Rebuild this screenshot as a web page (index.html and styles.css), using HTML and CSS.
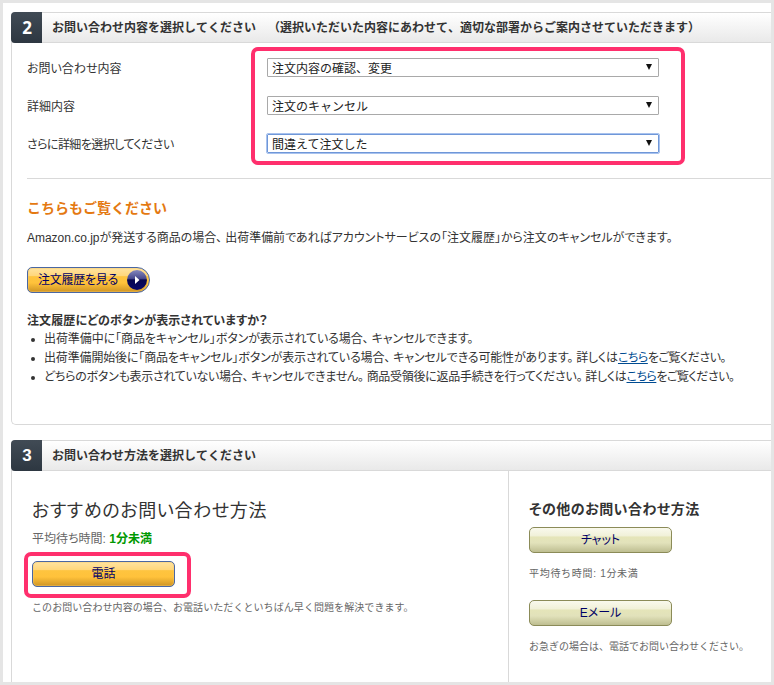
FILE: index.html
```html
<!DOCTYPE html>
<html lang="ja">
<head>
<meta charset="utf-8">
<title>お問い合わせ</title>
<link rel="stylesheet" href="styles.css">
</head>
<body>
<main class="frame">
  <section class="card topic">
    <header class="bar"><b class="num num-two">2</b><h2>お問い合わせ内容を選択してください　（選択いただいた内容にあわせて、適切な部署からご案内させていただきます）</h2></header>
    <div class="body">
      <div class="fields">
        <div class="field"><label class="p l1">お問い合わせ内容</label><div class="select"><span>注文内容の確認、変更</span><i class="arrow"></i></div></div>
        <div class="field"><label class="p l2">詳細内容</label><div class="select"><span>注文のキャンセル</span><i class="arrow"></i></div></div>
        <div class="field"><label class="p l3">さらに詳細を選択してください</label><div class="select focus"><span>間違えて注文した</span><i class="arrow"></i></div></div>
        <div class="mark mark-fields"></div>
      </div>
      <h3 class="also">こちらもご覧ください</h3>
      <p class="p intro">Amazon.co.jpが発送する商品の場合<span class="c">、</span>出荷準備前であればアカウントサービスの「注文履歴」から注文のキャンセルができます。</p>
      <a class="btn gold history"><span class="p">注文履歴を見る</span>
        <svg width="22" height="22" viewBox="0 0 22 22"><defs><linearGradient id="orb" x1="0" y1="0" x2="0" y2="1"><stop offset="0" stop-color="#8588bd"/><stop offset=".42" stop-color="#4a4b8e"/><stop offset=".5" stop-color="#06064f"/><stop offset="1" stop-color="#08086a"/></linearGradient></defs><circle cx="11" cy="11" r="10" fill="url(#orb)"/><path d="M9 7l4.5 4-4.5 4z" fill="#fff"/></svg>
      </a>
      <h4 class="p ask">注文履歴にどのボタンが表示されていますか？</h4>
      <ul class="p">
        <li><span class="i1">出荷準備中に「商品をキャンセル」ボタンが表示されている場合<span class="c">、</span>キャンセルできます。</span></li>
        <li><span class="i2">出荷準備開始後に「商品をキャンセル」ボタンが表示されている場合<span class="c">、</span>キャンセルできる可能性があります<span class="c">。</span>詳しくは</span><span class="tail"><a>こちら</a>をご覧ください。</span></li>
        <li><span class="i3">どちらのボタンも表示されていない場合<span class="c">、</span>キャンセルできません<span class="c">。</span>商品受領後に返品手続きを行ってください<span class="c">。</span>詳しくは</span><span class="tail"><a>こちら</a>をご覧ください。</span></li>
      </ul>
    </div>
  </section>
  <section class="card method">
    <header class="bar"><b class="num">3</b><h2>お問い合わせ方法を選択してください</h2></header>
    <div class="cols">
      <div class="best">
        <h3 class="p">おすすめのお問い合わせ方法</h3>
        <p class="p wait">平均待ち時間: <b>1分未満</b></p>
        <div class="phone"><a class="btn gold wide"><span class="p">電話</span></a><div class="mark mark-phone"></div></div>
        <p class="small s1">このお問い合わせ内容の場合、お電話いただくといちばん早く問題を解決できます。</p>
      </div>
      <div class="other">
        <h3 class="p">その他のお問い合わせ方法</h3>
        <a class="btn olive wide"><span class="p">チャット</span></a>
        <p class="small s2">平均待ち時間: 1分未満</p>
        <a class="btn olive wide"><span class="p">Eメール</span></a>
        <p class="small s3">お急ぎの場合は、電話でお問い合わせください。</p>
      </div>
    </div>
  </section>
</main>
</body>
</html>
```
FILE: styles.css
```css
* { box-sizing: border-box; }
body { margin: 0; width: 774px; height: 685px; overflow: hidden; font: 12px/19px "Liberation Sans", "Noto Sans CJK JP", sans-serif; color: #333; }
h2, h3, h4, p, ul { margin: 0; padding: 0; }
.frame { width: 774px; height: 685px; border: 3px solid #e5e5e5; padding: 9px 0 0 8px; background: #fff; overflow: hidden; }
.card { border: 1px solid #d9d9d9; border-right: 0; white-space: nowrap; }
.topic { height: 413px; border-radius: 5px 0 0 5px; }
.method { height: 260px; margin-top: 15px; border-radius: 5px 0 0 0; }
.bar { display: flex; height: 31px; margin: -1px 0 0 -1px; border: solid #d9d9d9; border-width: 1px 0; background: linear-gradient(#fff, #e9e9e9); border-radius: 5px 0 0 0; }
.num { width: 31px; height: 31px; margin: -1px 0; background: linear-gradient(#414b55, #2d3741); border-radius: 4px 0 0 4px; color: #fff; font-size: 17px; line-height: 31px; text-align: center; padding-left: 1px; }
.num-two { font-family: "Noto Sans", sans-serif; }
.bar h2 { margin-left: 10px; font: 700 12px/28px "Noto Sans CJK JP", sans-serif; text-spacing-trim: space-all; font-kerning: none; }
.p { font-feature-settings: "palt"; white-space: nowrap; }
.body { padding-left: 15px; }
.fields { position: relative; height: 136px; padding-top: 15px; border-bottom: 1px solid #d9d9d9; }
.field { display: flex; height: 38px; }
.field label { width: 240px; line-height: 23px; }
.l3 { letter-spacing: -0.57px; }
.select { display: flex; align-items: center; justify-content: space-between; width: 392px; height: 19px; padding: 0 5px 0 4px; border: 1px solid #a9a9a9; border-radius: 1px; background: #fff; }
.select span { font-family: "Noto Sans CJK JP", sans-serif; line-height: 17px; color: #222; }
.select.focus { border-color: #6f97d8; outline: 1px solid #a8c2ee; }
.arrow { width: 0; height: 0; border: 3px solid transparent; border-top: 6px solid #111; border-bottom: 0; margin: 0 1px 1px 0; }
.mark { position: absolute; border: 4px solid #ff2f6d; border-radius: 7px; }
.mark-fields { left: 224px; top: 4px; width: 434px; height: 118px; }
.also { margin-top: 16px; font: 700 14px/24px "Noto Sans CJK JP", sans-serif; color: #e47911; }
.intro { margin-top: 10px; line-height: 19px; letter-spacing: -0.02px; }
.c { margin-right: 3px; }
.btn { display: flex; align-items: center; justify-content: center; height: 26px; border: 1px solid #4a67a2; border-radius: 5px; color: #000066; }
.btn .p { padding-top: 1px; }
.gold { background: linear-gradient(#ffe3a0, #ffd77c 32%, #fec43f 36%, #ffc23b 62%, #cf9423); box-shadow: inset 0 0 0 1px #f4ca6d66; }
.olive { border-color: #8b8b58; background: linear-gradient(#f9f9ed, #f1f1d9 32%, #e5e5b9 38%, #e2e2bb 62%, #bebe91); }
.wide { width: 143px; }
.history { width: 123px; margin-top: 19px; justify-content: space-between; padding: 0 1px 0 10px; border-radius: 5px 13px 13px 5px; letter-spacing: -0.25px; }
.history .p { padding-top: 0; }
.ask { margin-top: 19px; font-size: 12px; line-height: 18px; letter-spacing: 0.12px; }
ul { list-style: none; }
li { display: flex; height: 19px; line-height: 19px; }
li::before { content: ""; width: 4px; height: 4px; margin: 8px 9px 0 4px; border-radius: 50%; background: #333; }
.i1 { letter-spacing: -0.08px; }
.i2 { letter-spacing: -0.15px; }
.i3 { letter-spacing: -0.28px; }
.tail { letter-spacing: -0.5px; }
li a { color: #004b91; text-decoration: underline; }
.cols { display: flex; height: 230px; }
.best { width: 497px; padding: 27px 0 0 20px; border-right: 1px solid #d9d9d9; }
.best h3 { font-size: 18px; font-weight: 400; line-height: 26px; letter-spacing: 0.64px; }
.wait { margin-top: 6px; color: #666; }
.wait b { color: #090; }
.phone { position: relative; margin-top: 12px; }
.mark-phone { left: -8px; top: -9px; width: 167px; height: 46px; }
.small { font-size: 10px; line-height: 16px; color: #666; margin-top: 13px; }
.s1 { letter-spacing: 0.07px; }
.other { padding: 26px 0 0 20px; }
.other h3 { font-size: 14px; line-height: 24px; margin-bottom: 6px; letter-spacing: 0.5px; }
.s2 { margin-bottom: 18px; letter-spacing: 0.7px; }
```
